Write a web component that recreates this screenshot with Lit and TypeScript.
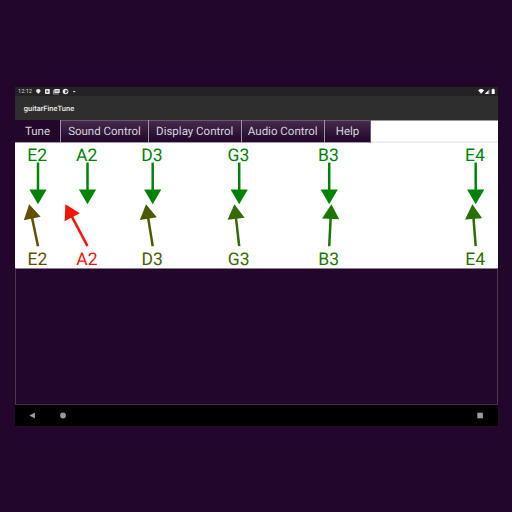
import { LitElement, html, svg, css } from "lit";
import { customElement } from "lit/decorators.js";

interface GuitarString {
  note: string;
  x: number;
  tip: number;
  color: string;
}

const STRINGS: GuitarString[] = [
  { note: "E2", x: 23, tip: 14.2, color: "#625000" },
  { note: "A2", x: 72.5, tip: 50.4, color: "#f51505" },
  { note: "D3", x: 137.7, tip: 131, color: "#4b5c00" },
  { note: "G3", x: 224.2, tip: 219.4, color: "#376a04" },
  { note: "B3", x: 314.2, tip: 316.4, color: "#1c7600" },
  { note: "E4", x: 460.7, tip: 457.4, color: "#2a7000" },
];

const TARGET = "#008208";

@customElement("tuner-chart")
export class TunerChart extends LitElement {
  static styles = css`
    :host { display: block; height: 125px; background: #fff; }
    svg { display: block; overflow: visible; }
    text { font: 17.5px Roboto, sans-serif; text-anchor: middle; text-rendering: geometricPrecision; }
  `;

  private arrow(x1: number, y1: number, x2: number, y2: number, color: string) {
    const len = Math.hypot(x2 - x1, y2 - y1);
    const angle = (Math.atan2(y2 - y1, x2 - x1) * 180) / Math.PI;
    return svg`<g transform="translate(${x1} ${y1}) rotate(${angle})" fill=${color}>
      <rect x="0" y="-1.25" width=${len - 10} height="2.5"></rect>
      <polygon points="${len - 14.7},-8.6 ${len},0 ${len - 14.7},8.6"></polygon>
    </g>`;
  }

  render() {
    return html`<svg width="483" height="125" viewBox="0 0 483 125">
      ${STRINGS.map((s) => svg`
        <text x=${s.x - 0.8} y="17.5" fill=${TARGET}>${s.note}</text>
        ${this.arrow(s.x, 19.6, s.x, 61.2, TARGET)}
        ${this.arrow(s.x, 103.2, s.tip, 61.2, s.color)}
        <text x=${s.x - 0.5} y="122.4" fill=${s.color}>${s.note}</text>
      `)}
    </svg>`;
  }
}

@customElement("app-root")
export class AppRoot extends LitElement {
  static styles = css`
    :host {
      display: block;
      box-sizing: border-box;
      width: 512px;
      height: 512px;
      padding: 87px 14px 0 15px;
      background: #22072b;
      font-family: Roboto, sans-serif;
      text-rendering: geometricPrecision;
      overflow: hidden;
    }
    .device { display: flex; flex-direction: column; height: 339px; }
    .status {
      display: flex;
      align-items: center;
      height: 9px;
      padding: 0 2px 0 3px;
      background: #232323;
      color: #d8d8d8;
      font-size: 5.6px;
      line-height: 9px;
    }
    .time { width: 17px; padding-top: 2px; line-height: 7px; white-space: nowrap; }
    .spacer { flex: 1; }
    .status svg { display: block; }
    .appbar {
      box-sizing: border-box;
      height: 24px;
      padding-left: 8.8px;
      background: #2e2e2e;
      color: #ededed;
      font-size: 7.5px;
      font-weight: 500;
      line-height: 25px;
    }
    .tabs { display: flex; height: 23px; background: linear-gradient(#999 0 1px, #fff 1px 21px, #eee 21px); }
    .tab {
      box-sizing: border-box;
      height: 23px;
      border-right: 1px solid #9d94a2;
      border-bottom: 1px solid #a299a6;
      background: linear-gradient(#6a5671 0 1px, #432b4c 1px, #2a0e34 75%, #22072b);
      color: #d9d2dc;
      font-size: 11.5px;
      line-height: 22px;
      text-align: center;
      white-space: nowrap;
    }
    .tab.active { background: #22072b; }
    .tab:last-child { border-right-color: #6a5b70; }
    .body { flex: 1; box-sizing: border-box; border: 1px solid #4b3752; border-top-color: #8b7f90; border-bottom-color: #39343b; }
    .nav { height: 21px; background: #000; }
    .nav svg { display: block; }
  `;

  private tabs = [
    { label: "Tune", width: 46 },
    { label: "Sound Control", width: 88 },
    { label: "Display Control", width: 92.5 },
    { label: "Audio Control", width: 83.5 },
    { label: "Help", width: 46 },
  ];

  render() {
    return html`<div class="device">
      <div class="status">
        <span class="time">12:12</span>
        <svg width="42" height="9" viewBox="0 0 42 9" fill="#e8e8e8">
          <path d="M3.3 2C1.9 2 1.1 2.9 1.1 4.1C1.1 5.5 2.5 5.6 3.3 7C4.1 5.6 5.5 5.5 5.5 4.1C5.5 2.9 4.7 2 3.3 2Z"></path>
          <rect x="10" y="2.1" width="4.8" height="4.8" rx=".6"></rect>
          <path d="M11.3 3.4h1.5l.7 1-.7 1h-1.5z" fill="#555"></path>
          <rect x="19.3" y="2" width="5.4" height="4" rx=".5"></rect>
          <path d="M18.4 3v4h5.4" fill="none" stroke="#ccc" stroke-width=".7"></path>
          <path d="M20.4 3.2h3.2v1.5h-3.2z" fill="#888"></path>
          <circle cx="30.5" cy="4.5" r="2.8"></circle>
          <path d="M30.2 3.2h2.2v1.6l-1.4 1.4h-.8z" fill="#333"></path>
          <rect x="38.2" y="4" width="2" height="1.1"></rect>
        </svg>
        <span class="spacer"></span>
        <svg width="18" height="9" viewBox="0 0 18 9" fill="#fff">
          <path d="M.2 3.4Q3.1 .8 6 3.4L3.1 6.8Z"></path>
          <path d="M6.8 6.9L11.4 2.3V6.9Z" fill="#aaa"></path>
          <path d="M6.8 6.9L9.8 3.9V6.9Z"></path>
          <path d="M13.7 2.3h.9v-.6h1.2v.6h.9v4.7h-3z"></path>
        </svg>
      </div>
      <div class="appbar">guitarFineTune</div>
      <div class="tabs">
        ${this.tabs.map((t, i) => html`<div class="tab ${i === 0 ? "active" : ""}" style="width:${t.width}px">${t.label}</div>`)}
      </div>
      <tuner-chart></tuner-chart>
      <div class="body"></div>
      <div class="nav">
        <svg width="483" height="21" viewBox="0 0 483 21" fill="#999">
          <path d="M14.3 10.5L20 7.5V13.5Z"></path>
          <circle cx="48" cy="10.5" r="2.9"></circle>
          <rect x="462.3" y="7.7" width="5.6" height="5.6"></rect>
        </svg>
      </div>
    </div>`;
  }
}
